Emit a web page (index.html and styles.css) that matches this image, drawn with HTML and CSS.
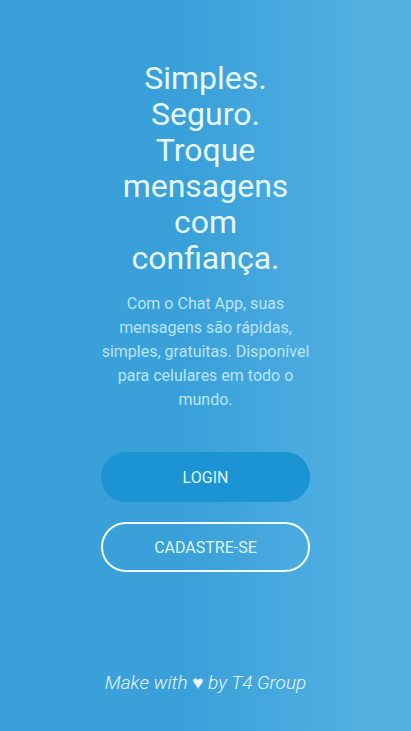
FILE: index.html
```html
<!DOCTYPE html>
<html lang="pt-BR">
<head>
<meta charset="utf-8">
<meta name="viewport" content="width=device-width, initial-scale=1">
<title>Chat App</title>
<link rel="stylesheet" href="styles.css">
</head>
<body>
<main class="hero">
<h1 class="title">Simples. Seguro. Troque mensagens com confiança.</h1>
<p class="lead">Com o Chat App, suas mensagens são rápidas, simples, gratuitas. Disponível para celulares em todo o mundo.</p>
<div class="actions">
<button class="button button-solid" type="button">LOGIN</button>
<button class="button button-outline" type="button">CADASTRE-SE</button>
</div>
</main>
<footer class="footer">Make with ♥ by T4 Group</footer>
</body>
</html>
```
FILE: styles.css
```css
* {
  box-sizing: border-box;
}

body {
  margin: 0;
  min-height: 100vh;
  display: flex;
  flex-direction: column;
  justify-content: space-between;
  font-family: Roboto, sans-serif;
  color: #e6f8ff;
  text-align: center;
  background: linear-gradient(90deg, #39a0d9 0%, #39a0d9 45%, #50afe2 85%, #53b2e0 88%, #53b2e0 100%);
}

.hero {
  padding: 60px 101px 0;
}

.title {
  margin: 0;
  font-size: 32px;
  line-height: 36px;
  font-weight: 400;
}

.lead {
  margin: 16px 0 0;
  font-size: 16px;
  line-height: 24px;
  color: #bae5fb;
}

.actions {
  display: grid;
  gap: 20px;
  margin-top: 40px;
}

.button {
  height: 50px;
  border: 2px solid transparent;
  border-radius: 25px;
  background: transparent;
  color: #dcf6ff;
  font: inherit;
  font-size: 16px;
}

.button-solid {
  border-color: #1c93d2;
  background: #1c93d2;
}

.button-outline {
  border-color: #f0fcff;
}

.footer {
  padding-bottom: 36px;
  font-size: 19px;
  line-height: 24px;
  font-style: italic;
  font-weight: 300;
}
```
